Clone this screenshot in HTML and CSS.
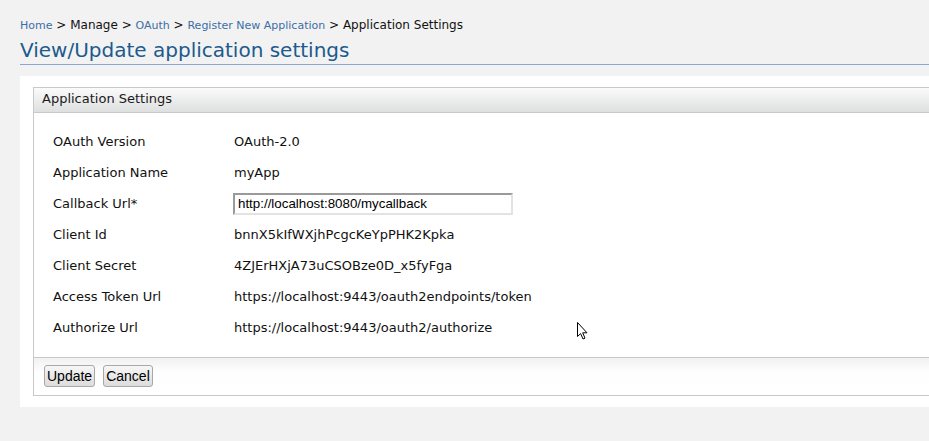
FILE: index.html
```html
<!DOCTYPE html>
<html>
<head>
<meta charset="utf-8">
<title>View/Update application settings</title>
<link rel="stylesheet" href="styles.css">
</head>
<body>
<div class="page">
  <div class="breadcrumb">
    <a class="crumb-link" href="#">Home</a> &gt; Manage &gt; <a class="crumb-link" href="#">OAuth</a> &gt; <a class="crumb-link" href="#">Register New Application</a> &gt; Application Settings
  </div>
  <h2 class="title">View/Update application settings</h2>
  <div class="panel">
    <div class="box">
      <div class="box-header">Application Settings</div>
      <div class="box-body">
        <div class="row"><div class="label">OAuth Version</div><div class="value">OAuth-2.0</div></div>
        <div class="row"><div class="label">Application Name</div><div class="value">myApp</div></div>
        <div class="row"><div class="label">Callback Url*</div><div class="value"><input class="text-input" type="text" value="http://localhost:8080/mycallback"></div></div>
        <div class="row"><div class="label">Client Id</div><div class="value">bnnX5kIfWXjhPcgcKeYpPHK2Kpka</div></div>
        <div class="row"><div class="label">Client Secret</div><div class="value">4ZJErHXjA73uCSOBze0D_x5fyFga</div></div>
        <div class="row"><div class="label">Access Token Url</div><div class="value">https://localhost:9443/oauth2endpoints/token</div></div>
        <div class="row"><div class="label">Authorize Url</div><div class="value">https://localhost:9443/oauth2/authorize</div></div>
      </div>
      <div class="box-footer">
        <button class="btn" type="button">Update</button>
        <button class="btn" type="button">Cancel</button>
      </div>
    </div>
  </div>
</div>
<svg class="cursor" width="13" height="20" viewBox="0 0 13 20" xmlns="http://www.w3.org/2000/svg">
  <path d="M1.5 1.5 L1.5 15.5 L4.6 12.6 L7 18 L9 17.1 L6.7 11.8 L11 11.8 Z" fill="#fff" stroke="#000" stroke-width="1" stroke-linejoin="miter"/>
</svg>
</body>
</html>
```
FILE: styles.css
```css
html, body {
  margin: 0;
  padding: 0;
  background: #f2f2f2;
  overflow: hidden;
}
body {
  font-family: "DejaVu Sans", sans-serif;
  color: #111;
  width: 929px;
  height: 441px;
  position: relative;
}
.page {
  padding-left: 20px;
}
.breadcrumb {
  padding-top: 17px;
  font-size: 12px;
  line-height: 16px;
  height: 16px;
  color: #111;
  white-space: nowrap;
}
.crumb-link {
  font-size: 11px;
  color: #3c6ea6;
  text-decoration: none;
}
.title {
  margin: 5px 0 0 0;
  font-size: 20px;
  font-weight: normal;
  line-height: 25px;
  color: #1d5a8d;
  padding-bottom: 1px;
  border-bottom: 1px solid #8ca6cf;
}
.panel {
  margin-top: 11px;
  background: #fff;
  padding: 11px 0 11px 13px;
}
.box {
  border: 1px solid #c9c9c9;
  border-right: none;
  background: #fff;
}
.box-header {
  height: 24px;
  line-height: 22px;
  padding-left: 8px;
  font-size: 13px;
  color: #1a1a1a;
  background: linear-gradient(#fbfbfb, #dedfdf);
  border-bottom: 1px solid #c8c8c8;
}
.box-body {
  padding: 13px 0 14px 19px;
}
.row {
  display: flex;
  align-items: center;
  height: 31px;
  font-size: 13px;
  color: #111;
}
.label {
  width: 181px;
  flex: none;
}
.value {
  white-space: nowrap;
}
.text-input {
  box-sizing: border-box;
  width: 280px;
  height: 22px;
  margin: 0 0 0 -1px;
  padding: 1px 3px;
  font-family: "Liberation Sans", Arial, sans-serif;
  font-size: 13.33px;
  color: #000;
  border: 2px solid;
  border-color: #9a9a9a #e3e3e3 #e3e3e3 #9a9a9a;
  background: #fff;
  outline: none;
}
.box-footer {
  border-top: 1px solid #c8c8c8;
  height: 38px;
  padding: 7px 0 0 10px;
  box-sizing: border-box;
  background: linear-gradient(#f1f1f1, #fefefe 14px, #fff);
  display: flex;
  align-items: flex-start;
  gap: 8px;
}
.btn {
  height: 22px;
  margin: 0;
  padding: 0 2px;
  font-family: "Liberation Sans", Arial, sans-serif;
  font-size: 14px;
  color: #000;
  border: 1px solid #a8a8a8;
  border-radius: 3px;
  background: linear-gradient(#f7f7f7, #dcdcdc);
  cursor: default;
}
.cursor {
  position: absolute;
  left: 576px;
  top: 321px;
}
```
